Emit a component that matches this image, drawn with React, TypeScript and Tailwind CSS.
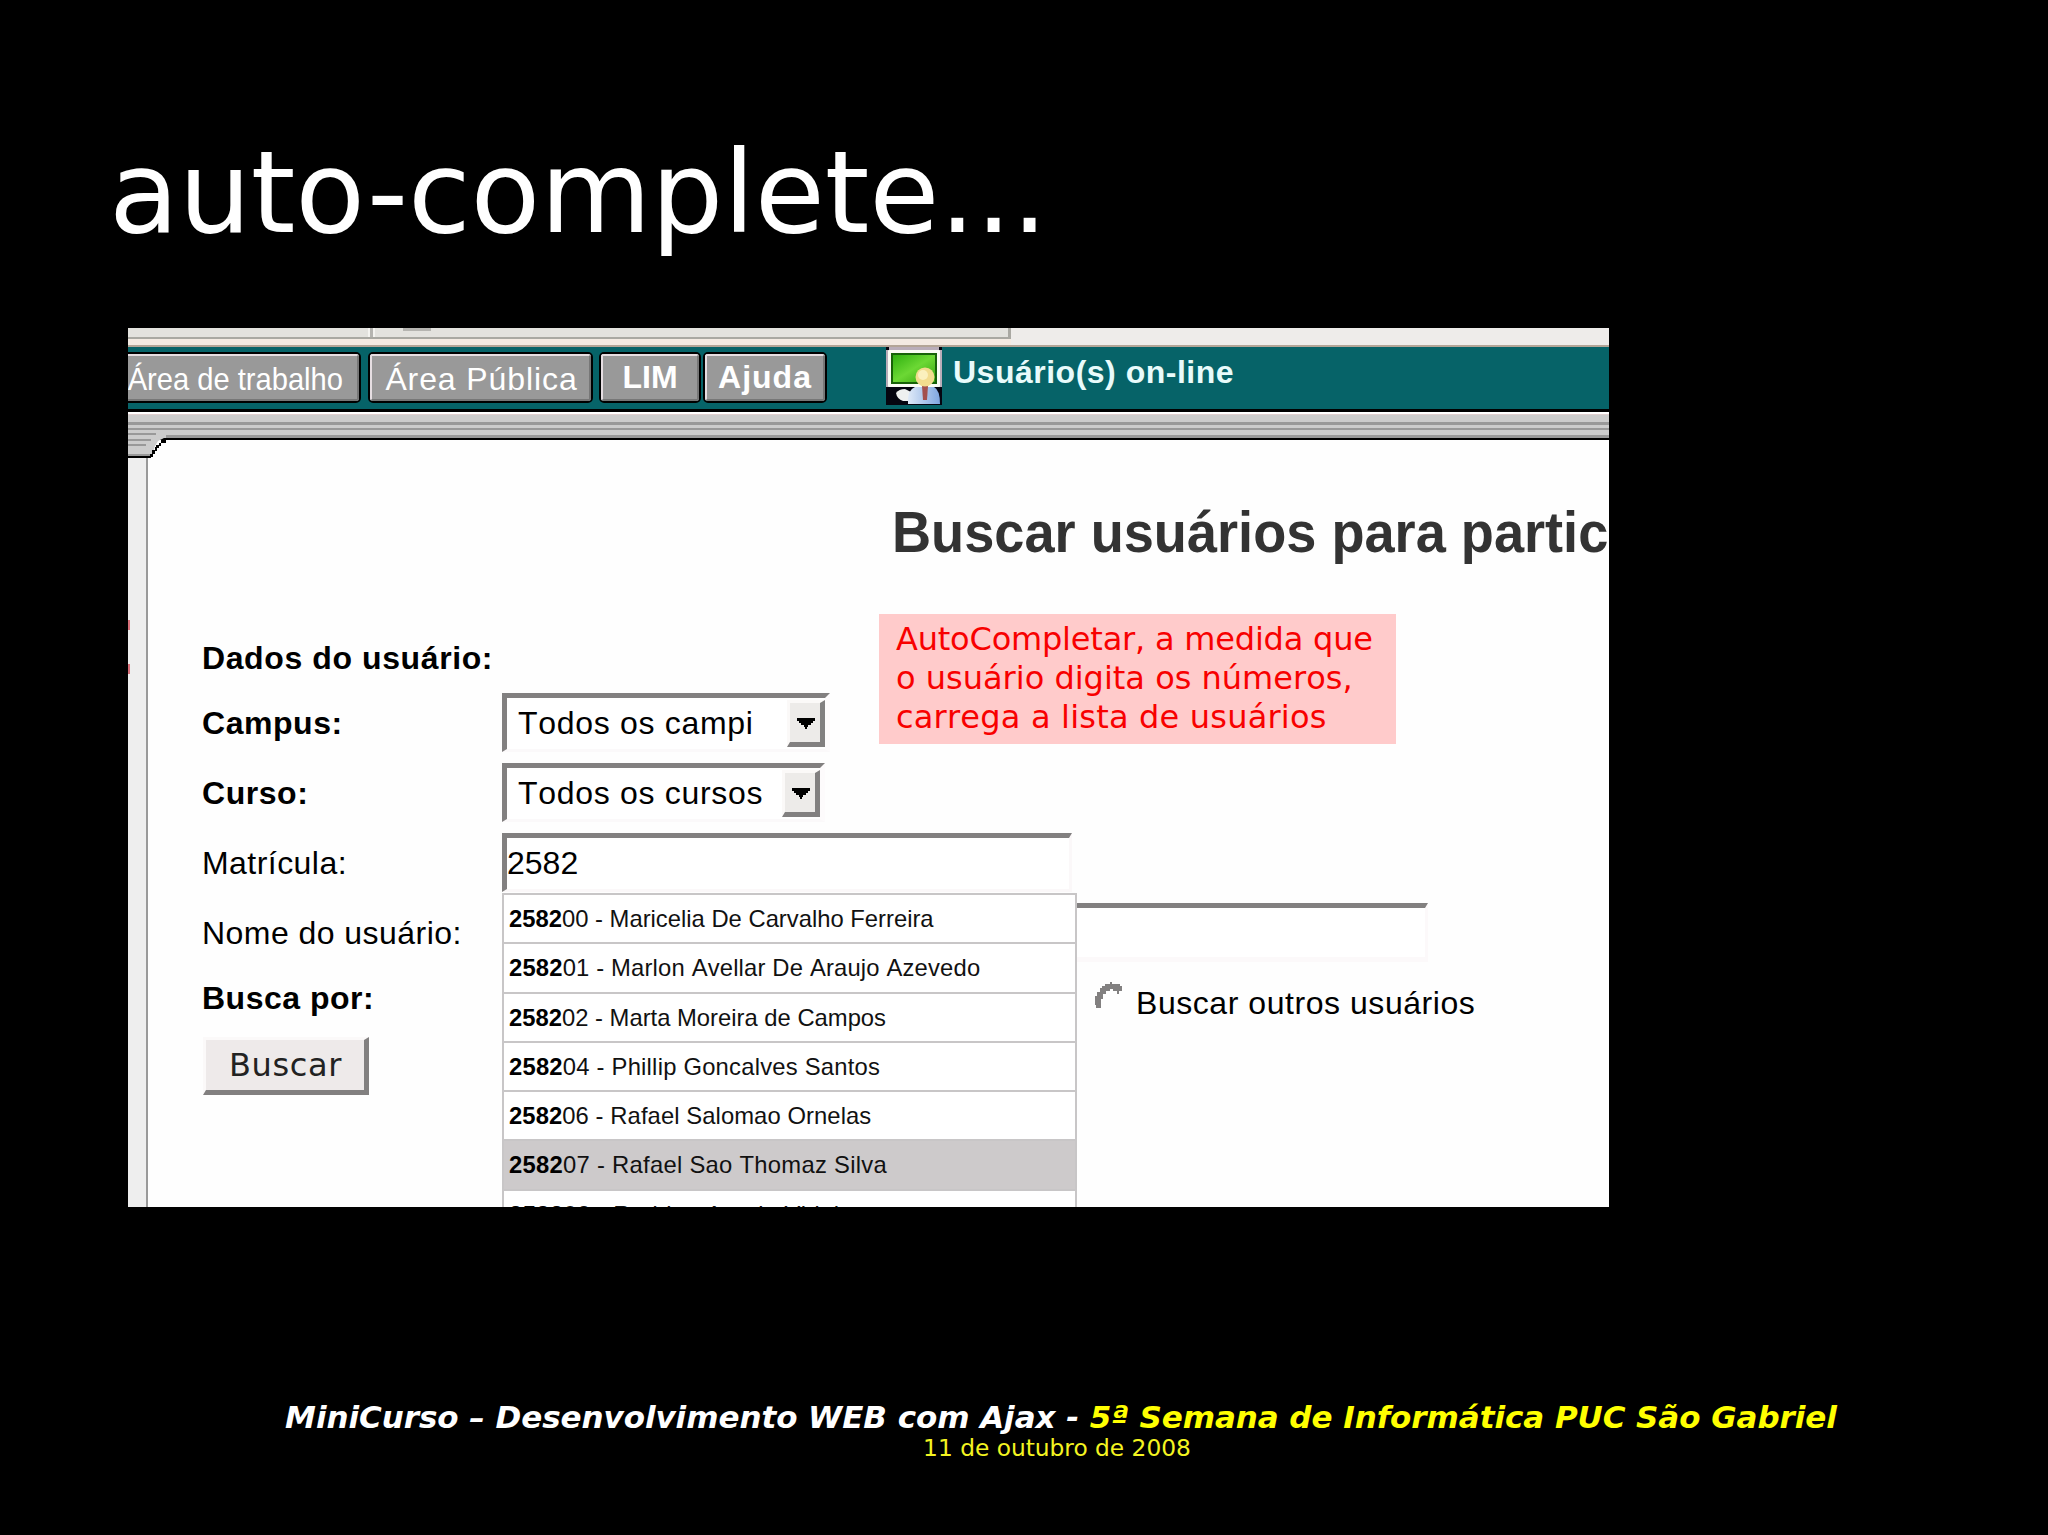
import type { ReactNode } from "react";
import clsx from "clsx";

const TYPED = "2582";

const SUGGESTIONS = [
  { code: "258200", name: "Maricelia De Carvalho Ferreira", tracking: "tracking-normal" },
  { code: "258201", name: "Marlon Avellar De Araujo Azevedo", tracking: "tracking-[0.17px]" },
  { code: "258202", name: "Marta Moreira de Campos", tracking: "tracking-normal" },
  { code: "258204", name: "Phillip Goncalves Santos", tracking: "tracking-[0.22px]" },
  { code: "258206", name: "Rafael Salomao Ornelas", tracking: "tracking-[0.08px]" },
  { code: "258207", name: "Rafael Sao Thomaz Silva", tracking: "tracking-[0.28px]", selected: true },
  { code: "258208", name: "Rodrigo Araujo Vidal", tracking: "tracking-[0.4px]" },
];

function MenuButton({ className, children }: { className?: string; children: ReactNode }) {
  return (
    <div
      className={clsx(
        "flex h-[51px] shrink-0 overflow-hidden rounded-[5px] border-2 border-black text-[32px] leading-10 text-white",
        className,
      )}
    >
      <div className="flex w-full justify-center whitespace-nowrap border-2 border-t-[#e6dee2] border-r-[#777] border-b-[#777] border-l-[#e6dee2] bg-[#999]">
        {children}
      </div>
    </div>
  );
}

function OnlineIcon() {
  return (
    <svg width="56" height="58" viewBox="0 0 56 58" className="shrink-0">
      <defs>
        <linearGradient id="screen" x1="0" y1="0" x2="1" y2="1">
          <stop offset="0" stopColor="#2fb010" />
          <stop offset="0.5" stopColor="#6cd834" />
          <stop offset="1" stopColor="#35a30e" />
        </linearGradient>
        <linearGradient id="shirt" x1="0" y1="0" x2="1" y2="0">
          <stop offset="0" stopColor="#dfeaf8" />
          <stop offset="1" stopColor="#7fa6e0" />
        </linearGradient>
      </defs>
      <rect width="56" height="58" fill="#b9adb9" />
      <path d="M0 0h3v3H0zM53 0h3v3h-3zM0 40h56v18H0z" fill="#050510" />
      <rect x="2" y="3" width="52" height="37" rx="1" fill="#fafcf4" />
      <rect x="5" y="6" width="46" height="31" fill="#176208" />
      <rect x="7" y="8" width="42" height="27" fill="url(#screen)" />
      <path d="M10 46q3-4 9-4l8 4v8h-10q-6-2-7-8z" fill="#eef0f0" />
      <path d="M22 57q-1-14 7-17h19q6 3 6 17z" fill="url(#shirt)" />
      <path d="M36 39h6l-1 14h-4z" fill="#a3504e" />
      <circle cx="39" cy="30" r="9.500" fill="#f2dc8e" />
      <circle cx="37" cy="28" r="5" fill="#fbf0bd" />
    </svg>
  );
}

function Arrow() {
  return (
    <div className="flex h-[47px] w-[38px] shrink-0 items-center justify-center border-t-[3px] border-r-[5px] border-b-[5px] border-l-[3px] border-t-[#fbf9f8] border-r-[#828080] border-b-[#828080] border-l-[#fbf9f8] bg-[#edebe9]">
      <svg width="18" height="11" viewBox="0 0 18 11" className="mt-[2px] ml-px">
        <path d="M0 0h18v3h-2v2h-2v2h-3v2h-1v2H8V9H7V7H4V5H2V3H0z" fill="#000" />
      </svg>
    </div>
  );
}

function Select({ className, children }: { className: string; children: ReactNode }) {
  return (
    <div
      className={clsx(
        "flex h-[59px] items-center justify-between border-t-[5px] border-r-[5px] border-b-[3px] border-l-[5px] border-t-[#828080] border-r-[#fdfbfc] border-b-[#fbf9fa] border-l-[#828080] bg-white pl-[11px] tracking-[0.7px]",
        className,
      )}
    >
      <span className="-mt-[2px] whitespace-nowrap">{children}</span>
      <Arrow />
    </div>
  );
}

function Row({ label, bold, children }: { label: string; bold?: boolean; children?: ReactNode }) {
  return (
    <div className="flex h-[59px] items-center">
      <div className={clsx("w-[300px] shrink-0", bold ? "font-bold tracking-[0.55px]" : "tracking-[0.45px]")}>
        {label}
      </div>
      {children}
    </div>
  );
}

function SuggestionList() {
  return (
    <ul className="absolute top-[55px] -left-[5px] z-10 w-[575px] border-x-2 border-[#c8c6c7] bg-white text-[23.8px] leading-[47px]">
      {SUGGESTIONS.map((item) => (
        <li
          key={item.code}
          className={clsx(
            "h-[49.300px] border-t-2 border-[#c8c6c7] pl-[5px] whitespace-nowrap text-[#111]",
            item.tracking,
            item.selected && "bg-[#cdcacb]",
          )}
        >
          <b className="text-black">{TYPED}</b>
          {item.code.slice(TYPED.length)} - {item.name}
        </li>
      ))}
    </ul>
  );
}

function BrowserStrip() {
  return (
    <div className="flex h-[19px] shrink-0 flex-col border-b-2 border-[#b3a597] bg-[#eeecea]">
      <div className="flex h-[11px] w-[883px] border-r-[3px] border-b-2 border-[#a9a8a2] bg-[#e3e2de]">
        <div className="ml-[240px] h-[9px] w-[7px] border-x-2 border-[#f4f3f0] bg-[#b5b4b0]" />
        <div className="ml-[28px] h-[3px] w-[28px] bg-[#b5b4b0]" />
      </div>
      <div className="h-[6px] w-[883px] bg-[#f3eae2]" />
    </div>
  );
}

function PageFrame() {
  return (
    <div className="relative h-7 shrink-0 bg-[#ccc]">
      <div className="h-[2px] bg-white" />
      <div className="h-px bg-[#e0cfcf]" />
      <div className="mt-[7px] h-[3px] bg-[#999]" />
      <div className="mt-[3px] h-[2px] bg-[#999]" />
      <div className="mt-[5px] h-[3px] bg-[#999]" />
      <div className="h-[2px] bg-black" />
      {/* bevelled corner that steps down to the side bar */}
      <svg width="42" height="29" viewBox="0 0 42 29" className="absolute top-[17px] left-0">
        <path d="M0 2H38V9H36L30 12L27 17L24 26H0Z" fill="#ccc" />
        <path d="M0 4h28v2H0zM0 10h23v2H0zM0 15h18v2H0z" fill="#999" />
        <path d="M0 25h22v2H0z" fill="#999" />
        <path d="M38 11h4v18H22v-2h3v-2h2v-3h2v-3h2v-3h3v-2h4z" fill="#fefefe" />
        <path
          d="M0 27h23v2H0zM22 25h3v3h-3zM24 21h3v4h-3zM27 18h2v4h-2zM28 16h3v3h-3zM31 14h2v3h-2zM33 11h5v3h-5zM36 9h6v2h-6z"
          fill="#000"
        />
      </svg>
    </div>
  );
}

export default function App() {
  return (
    <div className="flex h-[1535px] w-[2048px] flex-col overflow-hidden bg-black font-['DejaVu_Sans',sans-serif] text-white">
      <h1 className="mt-[123px] ml-[109px] h-[205px] text-[114px] leading-[140px] tracking-[-0.15px]">auto-complete...</h1>

      <div className="relative ml-32 flex h-[879px] w-[1481px] shrink-0 flex-col overflow-hidden bg-[#fefefe] font-['Liberation_Sans',Arial,sans-serif] text-[32px] leading-10 text-black [font-kerning:none]">
        <BrowserStrip />

        <div className="flex h-[65px] shrink-0 border-b-[3px] border-black bg-[#066368]">
          <MenuButton className="mt-[5px] -ml-4 w-[249px]">
            <span className="mt-[3px] mr-[3px] origin-center scale-x-[0.91]">Área de trabalho</span>
          </MenuButton>
          <MenuButton className="mt-[5px] ml-[7px] w-[225px]">
            <span className="mt-[3px] ml-[2px] tracking-[0.9px]">Área Pública</span>
          </MenuButton>
          <MenuButton className="mt-[5px] ml-[6px] w-[102px]">
            <span className="mt-px font-bold">LIM</span>
          </MenuButton>
          <MenuButton className="mt-[5px] ml-[2px] w-[124px]">
            <span className="mt-px font-bold tracking-[1px]">Ajuda</span>
          </MenuButton>
          <div className="ml-[59px] flex">
            <OnlineIcon />
            <span className="mt-[5px] ml-[11px] font-bold tracking-[0.5px] text-[#e9fbfb]">Usuário(s) on-line</span>
          </div>
        </div>

        <PageFrame />

        <div className="flex grow">
          <div className="flex w-5 shrink-0 flex-col border-r-2 border-[#999] bg-[#eee] pt-[180px]">
            <div className="h-[10px] w-[2px] bg-[#d9707a]" />
            <div className="mt-[34px] h-[10px] w-[2px] bg-[#d9707a]" />
          </div>

          <div className="flex grow flex-col pl-[54px]">
            <h2 className="mt-[62px] ml-[690px] h-[60px] origin-left scale-x-[0.95] text-[57px] leading-[60px] font-bold whitespace-nowrap text-[#333]">
              Buscar usuários para partic
            </h2>

            <div className="mt-[76px] font-bold tracking-[0.6px]">Dados do usuário:</div>

            <div className="mt-[15px] flex flex-col gap-[11px]">
              <Row label="Campus:" bold>
                <Select className="w-[328px]">Todos os campi</Select>
              </Row>
              <Row label="Curso:" bold>
                <Select className="w-[323px]">Todos os cursos</Select>
              </Row>
              <Row label="Matrícula:">
                <div className="relative flex h-[59px] w-[570px] items-center border-t-[5px] border-r-[3px] border-b-[3px] border-l-[5px] border-t-[#828080] border-r-[#fbf8f9] border-b-[#fbf8f9] border-l-[#828080] bg-white">
                  <span className="-mt-[2px]">{TYPED}</span>
                  <SuggestionList />
                </div>
              </Row>
              <Row label="Nome do usuário:">
                <div className="h-[59px] w-[926px] border-t-[5px] border-r-[3px] border-b-[5px] border-t-[#828080] border-r-[#fcf9fa] border-b-[#fcf9fa] bg-white" />
              </Row>
            </div>

            <div className="mt-4 flex">
              <div className="w-[892px] font-bold tracking-[0.5px]">Busca por:</div>
              <svg width="32" height="32" viewBox="0 0 32 32" className="mt-[2px]">
                <path
                  d="M2 28h5v-9h2v-5h3v-3h4V9h3v2h4v3h2v-3h3V6h-2V4h-8V2h-2v2h-5v2H8v2H6v4H3v4H1v9h1z"
                  fill="#828080"
                />
              </svg>
              <div className="mt-[5px] ml-[10px] tracking-[0.55px]">Buscar outros usuários</div>
            </div>

            <button className="mt-[14px] ml-[1px] flex h-[58px] w-[166px] items-center justify-center border-t-[3px] border-r-[5px] border-b-[5px] border-l-[3px] border-t-[#fbf9f9] border-r-[#828080] border-b-[#828080] border-l-[#fbf9f9] bg-[#eeeaea] pl-px font-['DejaVu_Sans',sans-serif] text-[32px] tracking-[0.6px] text-[#222]">
              Buscar
            </button>
          </div>
        </div>

        <div className="absolute top-[286px] left-[751px] flex h-[130px] w-[517px] flex-col bg-[#ffcbcb] pt-[6px] pl-[17px] font-['DejaVu_Sans',sans-serif] text-[32px] leading-[39px] whitespace-nowrap text-[#f80000]">
          <span className="tracking-[-0.2px]">AutoCompletar, a medida que</span>
          <span>o usuário digita os números,</span>
          <span className="tracking-[0.2px]">carrega a lista de usuários</span>
        </div>
      </div>

      <div className="mt-[190px] ml-[74px] text-center">
        <p className="text-[31px] leading-10 font-bold tracking-[-0.06px] whitespace-nowrap italic">
          MiniCurso – Desenvolvimento WEB com Ajax -{" "}
          <span className="text-[#ffff00]">5ª Semana de Informática PUC São Gabriel</span>
        </p>
        <p className="-mt-px mr-2 text-[23.3px] leading-6 text-[#f4f420]">11 de outubro de 2008</p>
      </div>
    </div>
  );
}
